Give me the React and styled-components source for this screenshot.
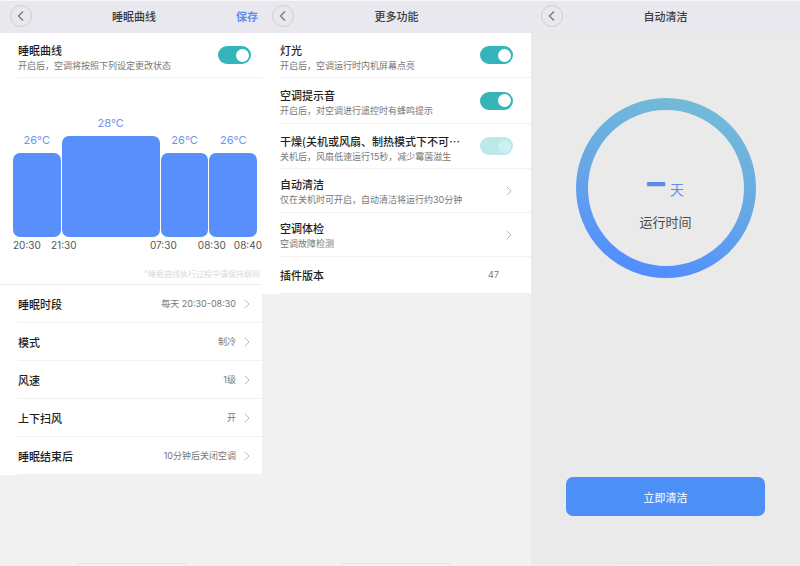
import React from "react";
import styled, { createGlobalStyle, css } from "styled-components";

const GlobalStyle = createGlobalStyle`
  * { box-sizing: border-box; }
  body {
    margin: 0;
    background: #f1f1f1;
    color: #1e1e1e;
    font-family: "Noto Sans CJK SC", "Noto Sans", sans-serif;
  }
  button { font-family: inherit; }
`;

const latinFirst = `Inter, "Noto Sans CJK SC", sans-serif`;

const Board = styled.main`
  display: grid;
  grid-template-columns: 262fr 269fr 269fr;
  min-height: 100vh;
`;

const Screen = styled.section`
  display: flex;
  flex-direction: column;
  min-width: 0;
  background: ${(p) => (p.$dim ? "#eaeaea" : "#f1f1f1")};
`;

const TopBar = styled.header`
  display: grid;
  grid-template-columns: 1fr auto 1fr;
  align-items: center;
  height: 33px;
  padding: 0 ${(p) => (p.$action ? 4 : 10)}px 2px 10px;
  border-top: 1px solid #f6f6f9;
  background: #e9e8ee;
`;

const BackButton = styled.button`
  display: flex;
  align-items: center;
  justify-content: center;
  width: 22px;
  height: 22px;
  padding: 0;
  border: 1px solid #cfced3;
  border-radius: 50%;
  background: transparent;
  color: #77767b;
`;

const TopTitle = styled.h1`
  margin: 0;
  font-size: 11px;
  line-height: 16px;
  font-weight: 500;
  color: #3c3c40;
`;

const SaveButton = styled.button`
  justify-self: end;
  padding: 0;
  border: 0;
  background: transparent;
  font-size: 11px;
  line-height: 16px;
  font-weight: 700;
  color: #5c8df0;
`;

const Sheet = styled.div`
  background: #fff;
`;

const rowBase = css`
  display: flex;
  align-items: center;
  justify-content: space-between;
  margin-left: 18px;
  padding: 0 ${(p) => p.$right}px 0 0;
  border: 0;
  border-bottom: 1px solid #f1f1f1;
  background: transparent;
  text-align: left;
  color: inherit;
`;

const SwitchRow = styled.label`
  ${rowBase}
  height: ${(p) => (p.$tall ? 46 : 45)}px;
`;

const LinkRow = styled.button`
  ${rowBase}
  width: calc(100% - 18px);
  height: ${(p) => (p.$single ? 38 : 44)}px;
`;

const InfoRow = styled.div`
  ${rowBase}
  height: 37px;
`;

const RowText = styled.span`
  display: flex;
  flex-direction: column;
  min-width: 0;
  padding-top: ${(p) => (p.$low ? 4 : 2)}px;
`;

const RowTitle = styled.span`
  font-size: 11px;
  line-height: 16px;
  font-weight: 500;
  white-space: nowrap;
`;

const RowNote = styled.span`
  font-family: ${latinFirst};
  font-size: 9px;
  line-height: 15px;
  color: #777;
  white-space: nowrap;
`;

const RowValue = styled.span`
  display: flex;
  align-items: center;
  gap: 8px;
  font-family: ${latinFirst};
  font-size: 9px;
  line-height: 14px;
  color: #777;
`;

const Toggle = styled.input`
  display: flex;
  align-items: center;
  justify-content: flex-end;
  appearance: none;
  flex: none;
  width: 33px;
  height: 18px;
  margin: 0;
  padding: 0 2px;
  border-radius: 9px;
  background: #35b5ba;

  &::before {
    content: "";
    width: 13px;
    height: 13px;
    border-radius: 50%;
    background: #fff;
  }
  &:not(:checked) {
    justify-content: flex-start;
    background: #d5d5d5;
  }
  &:disabled { background: #bde8ea; }
  &:disabled::before { background: #cff0f2; }
`;

const Chart = styled.figure`
  display: flex;
  flex-direction: column;
  margin: 0;
  padding-top: 37px;
  border-bottom: 1px solid #ececec;
`;

const Bars = styled.div`
  display: grid;
  grid-template-columns: 48fr 99fr 48fr 48fr;
  align-items: end;
  gap: 1px;
  padding: 0 5px 0 13px;
`;

const BarColumn = styled.div`
  display: flex;
  flex-direction: column;
  gap: 5px;
  font-family: ${latinFirst};
  font-size: 11px;
  line-height: 16px;
  text-align: center;
  color: #6b97ea;
`;

const Bar = styled.div`
  height: ${(p) => (p.$high ? 101 : 84)}px;
  border-radius: 7px;
  background: #588ffb;
`;

const Times = styled.div`
  display: grid;
  grid-template-columns: 38fr 99fr 48fr 36fr 28fr;
  padding-left: 13px;
  font-family: ${latinFirst};
  font-size: 10px;
  line-height: 16px;
  white-space: nowrap;
  color: #555;
`;

const Footnote = styled.figcaption`
  padding: 15px 2px 4px 0;
  font-size: 8px;
  line-height: 12px;
  text-align: right;
  color: #d9d9d9;
`;

const HomeBar = styled.div`
  align-self: center;
  width: 109px;
  height: 3px;
  margin-top: ${(p) => (p.$below ? "47px" : "auto")};
  border: 1px solid #e3e3e3;
  border-bottom: 0;
  border-radius: 2px 2px 0 0;
  background: ${(p) => (p.$below ? "#eeeeee" : "#f4f4f4")};
`;

const Dial = styled.div`
  display: grid;
  place-items: center;
  align-self: center;
  margin-top: 65px;

  > * { grid-area: 1 / 1; }
`;

const DialText = styled.div`
  display: flex;
  flex-direction: column;
  align-items: center;
  gap: 5px;
  padding-top: 20px;
`;

const Days = styled.div`
  display: flex;
  align-items: baseline;
  gap: 5px;
  line-height: 36px;
  color: #5c8bea;
`;

const DayCount = styled.span`
  font-family: Inter, sans-serif;
  font-size: 36px;
  font-weight: 700;
`;

const DayUnit = styled.span`
  font-size: 14px;
`;

const DialLabel = styled.div`
  font-size: 13px;
  line-height: 20px;
  color: #4a4a4a;
`;

const CleanButton = styled.button`
  height: 39px;
  margin: auto 35px 0;
  padding: 0;
  border: 0;
  border-radius: 7px;
  background: #4c8ff7;
  font-size: 11px;
  font-weight: 500;
  color: #e6f0ff;
`;

function Back() {
  return (
    <BackButton aria-label="返回">
      <svg width="8" height="12" viewBox="0 0 8 12" fill="none" stroke="currentColor" strokeWidth="1.3">
        <path d="M6 1.5 1.5 6 6 10.5" />
      </svg>
    </BackButton>
  );
}

function Chevron() {
  return (
    <svg width="6" height="10" viewBox="0 0 6 10" fill="none" stroke="#b9b9b9" strokeWidth="1">
      <path d="M.8.8 5.1 5 .8 9.2" />
    </svg>
  );
}

function Header({ title, action }) {
  return (
    <TopBar $action={Boolean(action)}>
      <Back />
      <TopTitle>{title}</TopTitle>
      {action && <SaveButton>{action}</SaveButton>}
    </TopBar>
  );
}

function SwitchItem({ title, note, right, disabled, tall }) {
  return (
    <SwitchRow $right={right} $tall={tall}>
      <RowText $low>
        <RowTitle>{title}</RowTitle>
        <RowNote>{note}</RowNote>
      </RowText>
      <Toggle type="checkbox" role="switch" defaultChecked disabled={disabled} />
    </SwitchRow>
  );
}

const curve = [
  { temp: "26°C" },
  { temp: "28°C", high: true },
  { temp: "26°C" },
  { temp: "26°C" },
];

const times = ["20:30", "21:30", "07:30", "08:30", "08:40"];

const settings = [
  ["睡眠时段", "每天 20:30-08:30"],
  ["模式", "制冷"],
  ["风速", "1级"],
  ["上下扫风", "开"],
  ["睡眠结束后", "10分钟后关闭空调"],
];

const tools = [
  ["自动清洁", "仅在关机时可开启，自动清洁将运行约30分钟"],
  ["空调体检", "空调故障检测"],
];

function SleepScreen() {
  return (
    <Screen>
      <Header title="睡眠曲线" action="保存" />
      <Sheet>
        <SwitchItem title="睡眠曲线" note="开启后，空调将按照下列设定更改状态" right={11} />
        <Chart>
          <Bars>
            {curve.map((item, i) => (
              <BarColumn key={i}>
                {item.temp}
                <Bar $high={item.high} />
              </BarColumn>
            ))}
          </Bars>
          <Times>
            {times.map((time) => (
              <span key={time}>{time}</span>
            ))}
          </Times>
          <Footnote>*睡眠曲线执行过程中请保持联网</Footnote>
        </Chart>
        {settings.map(([title, value]) => (
          <LinkRow key={title} $single $right={12}>
            <RowTitle>{title}</RowTitle>
            <RowValue>
              {value}
              <Chevron />
            </RowValue>
          </LinkRow>
        ))}
      </Sheet>
      <HomeBar />
    </Screen>
  );
}

function MoreScreen() {
  return (
    <Screen>
      <Header title="更多功能" />
      <Sheet>
        <SwitchItem title="灯光" note="开启后，空调运行时内机屏幕点亮" right={18} />
        <SwitchItem title="空调提示音" note="开启后，对空调进行遥控时有蜂鸣提示" right={18} tall />
        <SwitchItem
          title="干燥(关机或风扇、制热模式下不可⋯"
          note="关机后，风扇低速运行15秒，减少霉菌滋生"
          right={18}
          disabled
        />
        {tools.map(([title, note]) => (
          <LinkRow key={title} $right={19}>
            <RowText>
              <RowTitle>{title}</RowTitle>
              <RowNote>{note}</RowNote>
            </RowText>
            <Chevron />
          </LinkRow>
        ))}
        <InfoRow $right={32}>
          <RowTitle>插件版本</RowTitle>
          <RowValue>47</RowValue>
        </InfoRow>
      </Sheet>
      <HomeBar />
    </Screen>
  );
}

function CleanScreen() {
  return (
    <Screen $dim>
      <Header title="自动清洁" />
      <Dial>
        <svg width="180" height="180" viewBox="0 0 180 180" fill="none">
          <defs>
            <linearGradient id="ring" x1="0.62" y1="0" x2="0.32" y2="1">
              <stop offset="0" stopColor="#72bad8" />
              <stop offset="0.5" stopColor="#66a8e6" />
              <stop offset="1" stopColor="#528dff" />
            </linearGradient>
          </defs>
          <circle cx="90" cy="90" r="84" stroke="url(#ring)" strokeWidth="12" />
        </svg>
        <DialText>
          <Days>
            <DayCount>–</DayCount>
            <DayUnit>天</DayUnit>
          </Days>
          <DialLabel>运行时间</DialLabel>
        </DialText>
      </Dial>
      <CleanButton>立即清洁</CleanButton>
      <HomeBar $below />
    </Screen>
  );
}

export default function App() {
  return (
    <>
      <GlobalStyle />
      <Board lang="zh-CN">
        <SleepScreen />
        <MoreScreen />
        <CleanScreen />
      </Board>
    </>
  );
}
